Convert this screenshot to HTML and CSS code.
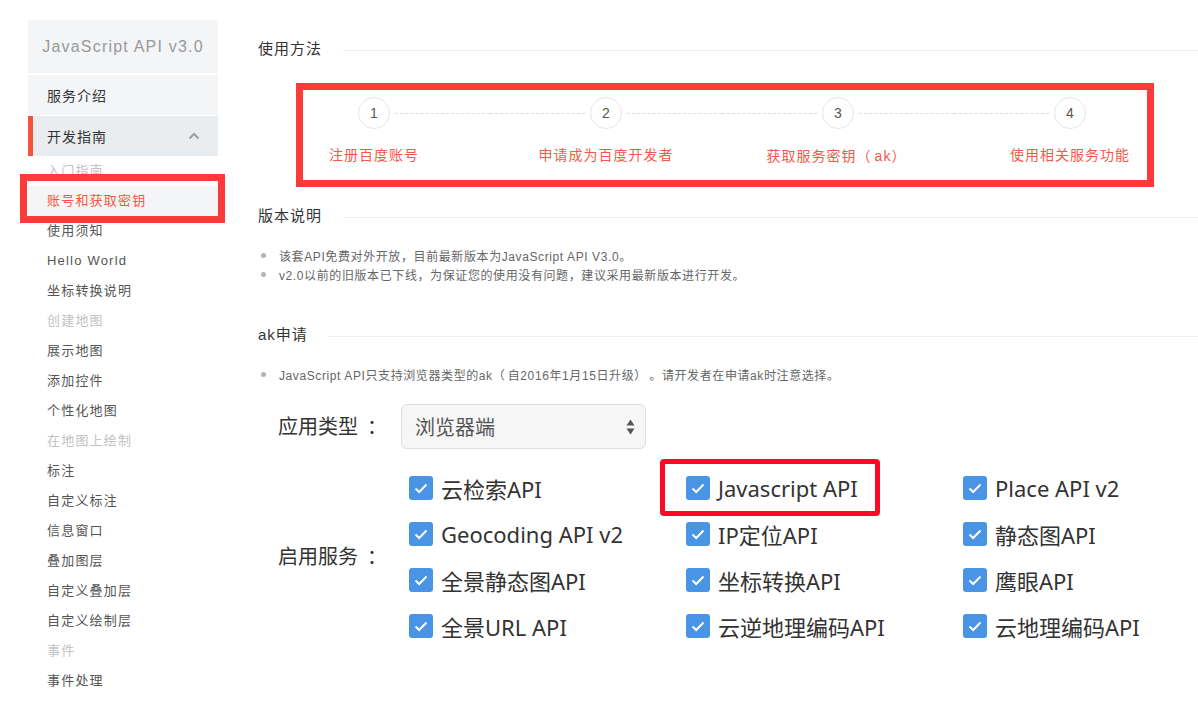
FILE: index.html
```html
<!DOCTYPE html>
<html lang="zh-CN">
<head>
<meta charset="utf-8">
<title>JavaScript API v3.0 - 账号和获取密钥</title>
<link rel="stylesheet" href="styles.css">
</head>
<body>
<div class="page">
  <aside class="sidebar">
    <div class="sb-title">JavaScript API v3.0</div>
    <a class="sb-item">服务介绍</a>
    <a class="sb-item sb-open">开发指南<svg class="chev" width="12" height="8" viewBox="0 0 12 8"><path d="M1.5 6.5 L6 2 L10.5 6.5" fill="none" stroke="#9a9ea6" stroke-width="2"/></svg></a>
    <ul class="sb-sub">
      <li class="cat">入门指南</li>
      <li class="active">账号和获取密钥</li>
      <li>使用须知</li>
      <li>Hello World</li>
      <li>坐标转换说明</li>
      <li class="cat">创建地图</li>
      <li>展示地图</li>
      <li>添加控件</li>
      <li>个性化地图</li>
      <li class="cat">在地图上绘制</li>
      <li>标注</li>
      <li>自定义标注</li>
      <li>信息窗口</li>
      <li>叠加图层</li>
      <li>自定义叠加层</li>
      <li>自定义绘制层</li>
      <li class="cat">事件</li>
      <li>事件处理</li>
    </ul>
  </aside>

  <main class="content">
    <h2 class="sec-title">使用方法</h2>
    <div class="steps">
      <div class="step first">
        <div class="step-head"><span class="seg"></span><span class="num">1</span><span class="seg"></span></div>
        <div class="label">注册百度账号</div>
      </div>
      <div class="step">
        <div class="step-head"><span class="seg"></span><span class="num">2</span><span class="seg"></span></div>
        <div class="label">申请成为百度开发者</div>
      </div>
      <div class="step">
        <div class="step-head"><span class="seg"></span><span class="num">3</span><span class="seg"></span></div>
        <div class="label">获取服务密钥<span class="punct">（</span>ak<span class="punct">）</span></div>
      </div>
      <div class="step last">
        <div class="step-head"><span class="seg"></span><span class="num">4</span><span class="seg"></span></div>
        <div class="label">使用相关服务功能</div>
      </div>
    </div>

    <h2 class="sec-title sec-gap">版本说明</h2>
    <ul class="bullets">
      <li>该套API免费对外开放，目前最新版本为JavaScript API V3.0。</li>
      <li>v2.0以前的旧版本已下线，为保证您的使用没有问题，建议采用最新版本进行开发。</li>
    </ul>

    <h2 class="sec-title sec-gap2">ak申请</h2>
    <ul class="bullets">
      <li>JavaScript API只支持浏览器类型的ak<span class="punct">（</span>自2016年1月15日升级<span class="punct">）</span>。请开发者在申请ak时注意选择。</li>
    </ul>

    <div class="form">
      <div class="form-row">
        <div class="form-label">应用类型<span class="colon">：</span></div>
        <div class="select">
          <span>浏览器端</span>
          <svg class="arrows" width="9" height="16" viewBox="0 0 9 16"><path d="M0.5 6.5 L4.5 0.5 L8.5 6.5 Z M0.5 9.5 L4.5 15.5 L8.5 9.5 Z" fill="#555"/></svg>
        </div>
      </div>
      <div class="form-row services">
        <div class="form-label label2">启用服务<span class="colon">：</span></div>
        <div class="grid">
          <label class="cb"><span class="box"><svg width="24" height="24" viewBox="0 0 24 24"><path d="M6.5 12.5 L10.2 16 L17.5 8.5" fill="none" stroke="#fff" stroke-width="2"/></svg></span>云检索API</label>
          <label class="cb mark"><span class="box"><svg width="24" height="24" viewBox="0 0 24 24"><path d="M6.5 12.5 L10.2 16 L17.5 8.5" fill="none" stroke="#fff" stroke-width="2"/></svg></span>Javascript API</label>
          <label class="cb"><span class="box"><svg width="24" height="24" viewBox="0 0 24 24"><path d="M6.5 12.5 L10.2 16 L17.5 8.5" fill="none" stroke="#fff" stroke-width="2"/></svg></span>Place API v2</label>

          <label class="cb"><span class="box"><svg width="24" height="24" viewBox="0 0 24 24"><path d="M6.5 12.5 L10.2 16 L17.5 8.5" fill="none" stroke="#fff" stroke-width="2"/></svg></span>Geocoding API v2</label>
          <label class="cb"><span class="box"><svg width="24" height="24" viewBox="0 0 24 24"><path d="M6.5 12.5 L10.2 16 L17.5 8.5" fill="none" stroke="#fff" stroke-width="2"/></svg></span>IP定位API</label>
          <label class="cb"><span class="box"><svg width="24" height="24" viewBox="0 0 24 24"><path d="M6.5 12.5 L10.2 16 L17.5 8.5" fill="none" stroke="#fff" stroke-width="2"/></svg></span>静态图API</label>

          <label class="cb"><span class="box"><svg width="24" height="24" viewBox="0 0 24 24"><path d="M6.5 12.5 L10.2 16 L17.5 8.5" fill="none" stroke="#fff" stroke-width="2"/></svg></span>全景静态图API</label>
          <label class="cb"><span class="box"><svg width="24" height="24" viewBox="0 0 24 24"><path d="M6.5 12.5 L10.2 16 L17.5 8.5" fill="none" stroke="#fff" stroke-width="2"/></svg></span>坐标转换API</label>
          <label class="cb"><span class="box"><svg width="24" height="24" viewBox="0 0 24 24"><path d="M6.5 12.5 L10.2 16 L17.5 8.5" fill="none" stroke="#fff" stroke-width="2"/></svg></span>鹰眼API</label>

          <label class="cb"><span class="box"><svg width="24" height="24" viewBox="0 0 24 24"><path d="M6.5 12.5 L10.2 16 L17.5 8.5" fill="none" stroke="#fff" stroke-width="2"/></svg></span>全景URL API</label>
          <label class="cb"><span class="box"><svg width="24" height="24" viewBox="0 0 24 24"><path d="M6.5 12.5 L10.2 16 L17.5 8.5" fill="none" stroke="#fff" stroke-width="2"/></svg></span>云逆地理编码API</label>
          <label class="cb"><span class="box"><svg width="24" height="24" viewBox="0 0 24 24"><path d="M6.5 12.5 L10.2 16 L17.5 8.5" fill="none" stroke="#fff" stroke-width="2"/></svg></span>云地理编码API</label>
        </div>
      </div>
    </div>
  </main>
</div>
</body>
</html>
```

FILE: styles.css
```css
*,
*::before,
*::after {
  box-sizing: border-box;
  margin: 0;
  padding: 0;
}

html, body {
  background: #fff;
  overflow: hidden;
}

body {
  font-family: "Liberation Sans", "Noto Sans CJK SC", sans-serif;
  color: #333;
}

/* full-width punctuation spacing */
.punct {
  font-family: "Noto Sans CJK SC", sans-serif;
}

.colon {
  margin-left: 9px;
}

.page {
  display: flex;
  width: 1198px;
  height: 704px;
}

/* ---------- sidebar ---------- */
.sidebar {
  flex: none;
  width: 218px;
  padding: 20px 0 0 28px;
}

.sb-title {
  height: 53px;
  line-height: 53px;
  background: #f4f5f7;
  color: #999;
  font-size: 16px;
  letter-spacing: 1.2px;
  text-align: center;
  margin-bottom: 2px;
}

.sb-item {
  display: flex;
  align-items: center;
  justify-content: space-between;
  height: 40px;
  padding: 0 18px 0 19px;
  background: #f4f5f7;
  font-size: 14px;
  letter-spacing: 1px;
  color: #333;
}

.sb-item + .sb-item {
  margin-top: 1px;
}

.sb-open {
  background: #eaedf0;
  border-left: 5px solid #f5533d;
  padding-left: 14px;
}

.chev {
  display: block;
}

.sb-sub {
  list-style: none;
}

.sb-sub li {
  height: 30px;
  line-height: 30px;
  padding-left: 19px;
  font-size: 13px;
  letter-spacing: 1.2px;
  color: #555;
}

.sb-sub li.cat {
  color: #c2c2c2;
}

.sb-sub li.active {
  position: relative;
  color: #f5553f;
  background: #f4f5f7;
}

/* red annotation frame */
.sb-sub li.active::after {
  content: "";
  position: absolute;
  left: -8px;
  right: -7px;
  top: -12px;
  bottom: -7px;
  border: 7px solid #fc3a3a;
}

/* ---------- main ---------- */
.content {
  flex: 1;
  padding: 39px 0 0 40px;
}

.sec-title {
  display: flex;
  align-items: center;
  gap: 21px;
  font-size: 15px;
  font-weight: normal;
  line-height: 20px;
  letter-spacing: 1px;
  color: #333;
}

.sec-title::after {
  content: "";
  flex: 1;
  height: 1px;
  margin-top: 2px;
  background: #efefef;
}

.sec-gap {
  margin-top: 40px;
}

.sec-gap2 {
  margin-top: 41px;
}

/* steps */
.steps {
  position: relative;
  display: flex;
  margin-top: 38px;
}

.steps::before {
  content: "";
  position: absolute;
  left: 38px;
  top: -14px;
  width: 858px;
  height: 104px;
  border: 7px solid #fc3a3a;
}

.step {
  width: 232px;
  display: flex;
  flex-direction: column;
  align-items: center;
}

.step-head {
  display: flex;
  align-items: center;
  width: 100%;
}

.seg {
  flex: 1;
  height: 0;
  border-top: 1px dashed #dcdcdc;
}

.seg:first-child {
  margin-right: 5px;
}

.seg:last-child {
  margin-left: 5px;
}

.step.first .seg:first-child,
.step.last .seg:last-child {
  visibility: hidden;
}

.num {
  flex: none;
  width: 32px;
  height: 32px;
  border: 1px solid #e6e6e6;
  border-radius: 50%;
  display: flex;
  align-items: center;
  justify-content: center;
  font-size: 14px;
  color: #555;
}

.label {
  margin-top: 16px;
  font-size: 14px;
  line-height: 20px;
  letter-spacing: 1px;
  color: #f4584b;
}

.label .punct {
  letter-spacing: 4px;
}

/* bullets */
.bullets {
  list-style: none;
  margin-top: 20px;
}

.bullets li {
  display: flex;
  align-items: center;
  height: 19px;
  font-size: 12px;
  letter-spacing: 0.6px;
  color: #666;
  white-space: pre;
}

.bullets li .punct {
  letter-spacing: 3px;
}

.bullets li::before {
  content: "";
  flex: none;
  width: 5px;
  height: 5px;
  border-radius: 50%;
  background: #b3b3b3;
  margin: 0 13px 0 3px;
}

/* form */
.form {
  margin-top: 20px;
  padding-left: 20px;
  font-family: "Noto Sans", "Noto Sans CJK SC", sans-serif;
}

.form-row {
  display: flex;
  align-items: center;
}

.form-label {
  flex: none;
  width: 123px;
  font-size: 20px;
  line-height: 28px;
  color: #333;
}

.label2 {
  width: 131px;
}

.select {
  display: flex;
  align-items: center;
  justify-content: space-between;
  width: 245px;
  height: 45px;
  padding: 0 10px 0 13px;
  background: #f6f6f6;
  border: 1px solid #dedede;
  border-radius: 6px;
  font-size: 20px;
  color: #555;
}

.arrows {
  display: block;
}

.services {
  margin-top: 16px;
}

.grid {
  display: grid;
  grid-template-columns: 277px 277px auto;
  grid-auto-rows: 46px;
}

.cb {
  position: relative;
  display: flex;
  align-items: center;
  gap: 8px;
  font-size: 22px;
  color: #333;
  white-space: nowrap;
}

.box {
  flex: none;
  width: 24px;
  height: 24px;
  border-radius: 3px;
  background: #4a94e5;
}

.box svg {
  display: block;
}

/* red annotation on Javascript API */
.cb.mark::after {
  content: "";
  position: absolute;
  left: -26px;
  top: -6px;
  width: 220px;
  height: 57px;
  border: 5px solid #ff0a26;
  border-radius: 4px;
}
```
